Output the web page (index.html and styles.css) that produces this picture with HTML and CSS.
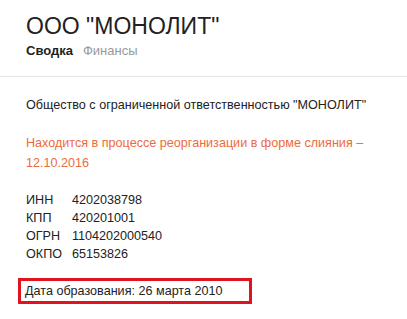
FILE: index.html
```html
<!DOCTYPE html>
<html lang="ru">
<head>
    <meta charset="UTF-8">
    <meta name="viewport" content="width=device-width, initial-scale=1.0">
    <title>ООО "МОНОЛИТ"</title>
    <link rel="stylesheet" href="styles.css">
</head>
<body>
    <div class="header">
        <h1>ООО "МОНОЛИТ"</h1>
        <div class="tabs">
            <a href="#" class="active">Сводка</a>
            <a href="#">Финансы</a>
        </div>
    </div>

    <div class="content">
        <p class="full-name">Общество с ограниченной ответственностью "МОНОЛИТ"</p>
        <p class="status">Находится в процессе реорганизации в форме слияния – 12.10.2016</p>

        <table class="codes">
            <tr><td>ИНН</td><td>4202038798</td></tr>
            <tr><td>КПП</td><td>420201001</td></tr>
            <tr><td>ОГРН</td><td>1104202000540</td></tr>
            <tr><td>ОКПО</td><td>65153826</td></tr>
        </table>

        <div class="founded">Дата образования: 26 марта 2010</div>
    </div>
</body>
</html>
```

FILE: styles.css
```css
body {
    margin: 0;
    background: #fff;
    font-family: "Liberation Sans", Arial, sans-serif;
    color: #222;
}
.header {
    padding: 12px 26px 0;
    height: 64px;
    border-bottom: 1px solid #e6e6e6;
}
h1 {
    margin: 0;
    font-size: 23px;
    font-weight: normal;
    line-height: 28px;
}
.tabs {
    margin-top: 3px;
    display: flex;
    gap: 10px;
}
.tabs a {
    font-size: 13px;
    color: #999;
    text-decoration: none;
}
.tabs a.active {
    color: #222;
    font-weight: bold;
}
.content {
    padding: 18px 26px 0;
    font-size: 12.6px;
    line-height: 20px;
}
.content p {
    margin: 0 0 18px;
}
.status {
    color: #ee6a3c;
    width: 345px;
}
.codes {
    border-collapse: collapse;
}
.codes td {
    padding: 0;
    line-height: 18px;
}
.codes td:first-child {
    width: 46px;
}
.founded {
    margin: 15px 0 0 -8px;
    width: 224px;
    padding: 0 0 0 4px;
    border: 3px solid #e0141e;
}
```
